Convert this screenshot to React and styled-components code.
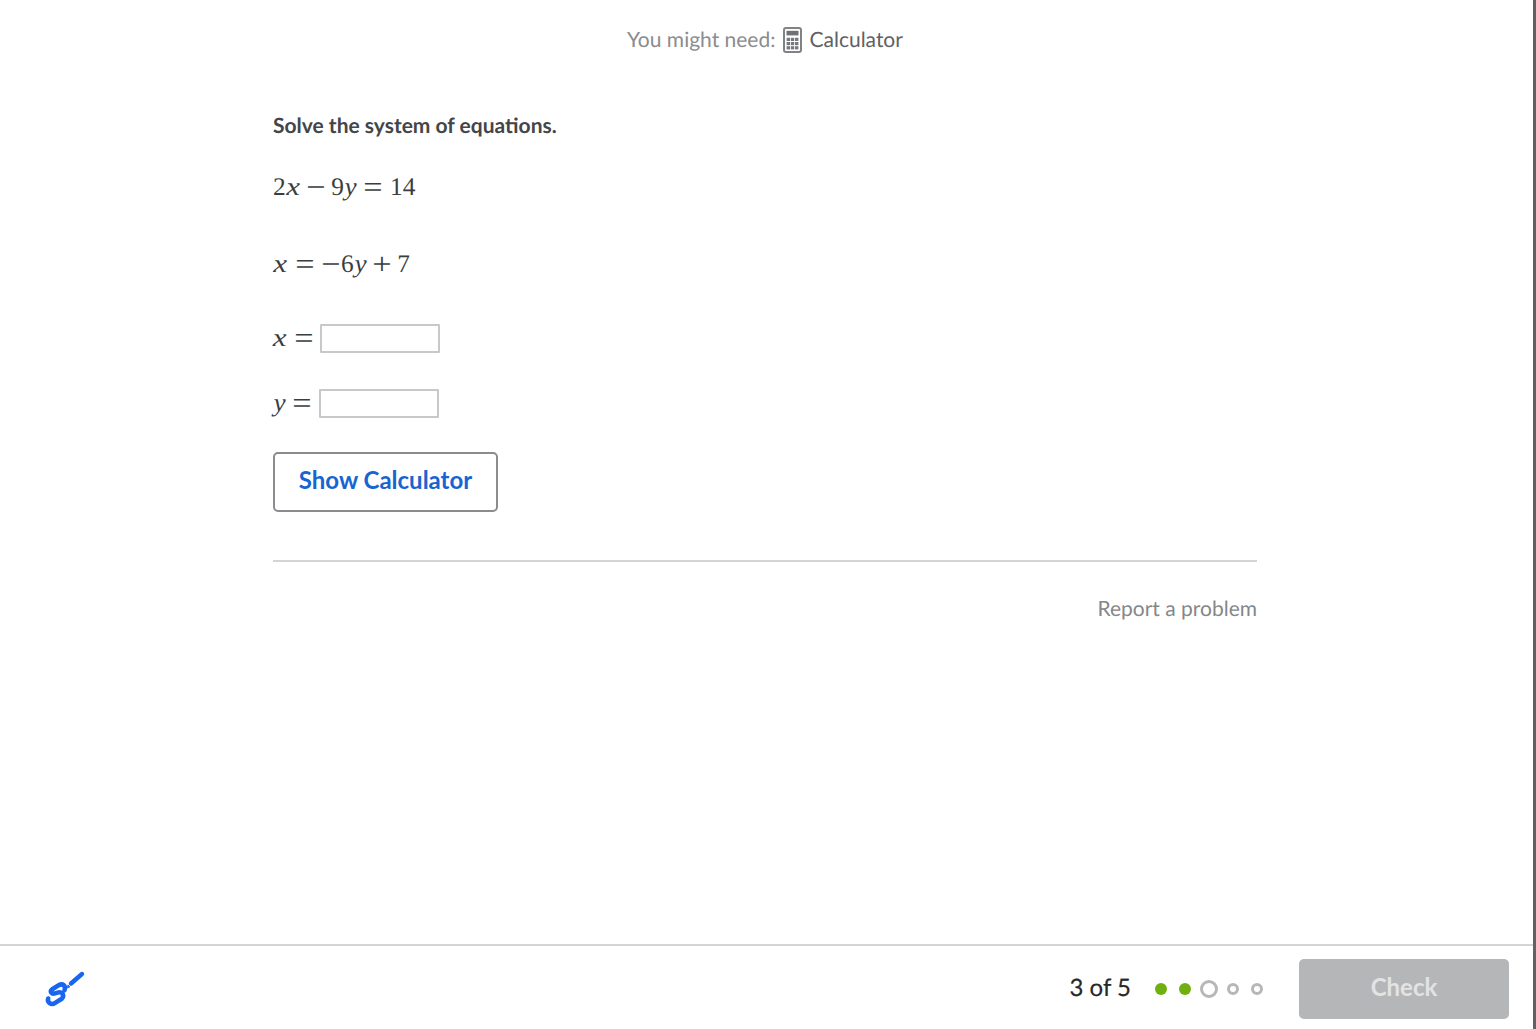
import React from 'react'
import styled, { createGlobalStyle } from 'styled-components'

const GlobalStyle = createGlobalStyle`
  html, body {
    margin: 0;
    padding: 0;
    background: #fff;
  }
  body {
    font-family: Lato, "Noto Sans", sans-serif;
    color: #3b3e40;
    text-rendering: geometricPrecision;
  }
`

export default function App(){
  return(
    <Page>
      <GlobalStyle />
      <Main>
        <Content>
          <Needs>
            <NeedsLabel>You might need:</NeedsLabel>
            <CalculatorIcon />
            <NeedsTool>Calculator</NeedsTool>
          </Needs>
          <Column>
            <Prompt>Solve the system of equations.</Prompt>
            <Equation $top={34}>
              <Num>2</Num><Var $w={14.5}>x</Var><Op $gap={5.6}>−</Op><Num>9</Num><Var $w={12.4} $y>y</Var><Op $gap={7}>=</Op><Num>14</Num>
            </Equation>
            <Equation $top={50}>
              <Var $w={14.5}>x</Var><Op $gap={7}>=</Op><Op $gap={0}>−</Op><Num>6</Num><Var $w={12.4} $y>y</Var><Op $gap={5.6}>+</Op><Num>7</Num>
            </Equation>
            <AnswerRow $top={46}>
              <Var $w={13.5}>x</Var><Op $gap={7}>=</Op><AnswerBox aria-label="x" />
            </AnswerRow>
            <AnswerRow $top={37}>
              <Var $w={12.4} $y>y</Var><Op $gap={7}>=</Op><AnswerBox aria-label="y" />
            </AnswerRow>
            <ShowButton>Show Calculator</ShowButton>
            <Divider />
            <Report>Report a problem</Report>
          </Column>
        </Content>
        <Footer>
          <ScratchIcon />
          <FooterRight>
            <Progress>3 of 5</Progress>
            <Dots>
              <Dot $kind="done" />
              <Dot $kind="done" />
              <Dot $kind="current" />
              <Dot />
              <Dot />
            </Dots>
            <CheckButton disabled>Check</CheckButton>
          </FooterRight>
        </Footer>
      </Main>
      <Edge />
    </Page>
  )
}

function CalculatorIcon(){
  let keys = []
  for(let row = 0; row < 3; row++){
    for(let col = 0; col < 3; col++){
      keys.push(<rect key={row + '-' + col} x={3.6 + col * 4.2} y={10.8 + row * 4.2} width="3.4" height="3.2" fill="#77797c" />)
    }
  }
  return(
    <IconSvg width="19" height="26" viewBox="0 0 19 26">
      <rect x="1" y="1" width="17" height="24" rx="2" fill="#fff" stroke="#808285" strokeWidth="2" />
      <rect x="3.5" y="3.8" width="12" height="4.6" fill="#6f7174" />
      {keys}
    </IconSvg>
  )
}

function ScratchIcon(){
  return(
    <svg width="44" height="44" viewBox="0 0 44 44" fill="none">
      <path d="M19 21C19 16 15 15 12 18L7 24C5 27 8 29 11 27L14 25C17 23 21 26 19 30L14 36C11 40 6 38 6 34" transform="rotate(18 13 27)" stroke="#1865f2" strokeWidth="4.6" strokeLinecap="round" strokeLinejoin="round" />
      <path d="M27 16.5L38 7" stroke="#1865f2" strokeWidth="4.4" strokeLinecap="round" />
      <path d="M22.8 21.2L24 17.8L26 20Z" fill="#1865f2" stroke="#1865f2" strokeWidth="0.6" />
    </svg>
  )
}

const Page = styled.div`
  display: flex;
  width: 1536px;
  height: 1029px;
  overflow: hidden;
  background: #fff;
`

const Main = styled.div`
  flex: 1;
  display: flex;
  flex-direction: column;
  min-width: 0;
`

const Edge = styled.div`
  width: 3px;
  background: #5f6165;
`

const Content = styled.div`
  flex: 1;
  min-height: 0;
  padding: 0 276px 0 273px;
`

const Needs = styled.div`
  display: flex;
  align-items: center;
  justify-content: center;
  height: 79px;
  font-size: 21px;
`

const NeedsLabel = styled.span`
  color: #8a8c8f;
  margin-right: 8px;
`

const NeedsTool = styled.span`
  color: #5f6165;
  margin-left: 7px;
`

const IconSvg = styled.svg`
  display: block;
`

const Column = styled.div`
  display: flex;
  flex-direction: column;
  align-items: flex-start;
  padding-top: 33px;
`

const Prompt = styled.div`
  font-size: 21px;
  font-weight: 700;
  line-height: 28px;
  color: #434649;
`

const Equation = styled.div`
  display: flex;
  align-items: baseline;
  margin-top: ${p => p.$top}px;
  height: 27px;
  font-family: "Liberation Serif", "DejaVu Serif", serif;
  font-size: 25.4px;
  line-height: 27px;
  color: #3b3e40;
`

const Num = styled.span``

const Var = styled.span`
  display: inline-block;
  width: ${p => p.$w}px;
  text-align: center;
  font-style: italic;
  transform: ${p => p.$y ? 'translateX(0.5px) scaleX(1.05)' : 'scaleX(1.22)'};
`

const Op = styled.span`
  display: inline-block;
  width: 19.8px;
  margin: 0 ${p => p.$gap}px;
  text-align: center;
  transform: scale(1.35, 1.2);
`

const AnswerRow = styled.div`
  display: flex;
  align-items: center;
  margin-top: ${p => p.$top}px;
  height: 28px;
  font-family: "Liberation Serif", "DejaVu Serif", serif;
  font-size: 25.4px;
  color: #3b3e40;
`

const AnswerBox = styled.input`
  box-sizing: border-box;
  width: 120px;
  height: 29px;
  padding: 0;
  background: #fff;
  border: 2px solid #c8c8c8;
  border-radius: 1px;
  outline: none;
`

const ShowButton = styled.button`
  box-sizing: border-box;
  width: 225px;
  height: 60px;
  margin-top: 35px;
  padding: 0 0 5px;
  background: #fff;
  border: 2px solid #8a8c8f;
  border-radius: 5px;
  color: #1865d2;
  font-family: Lato, sans-serif;
  font-size: 24px;
  font-weight: 700;
`

const Divider = styled.div`
  align-self: stretch;
  height: 2px;
  margin-top: 48px;
  background: #d4d5d6;
`

const Report = styled.div`
  align-self: flex-end;
  margin-top: 33px;
  font-size: 21px;
  line-height: 28px;
  color: #85878a;
`

const Footer = styled.div`
  box-sizing: border-box;
  display: flex;
  align-items: center;
  justify-content: space-between;
  height: 85px;
  padding: 2px 24px 0 44px;
  border-top: 2px solid #d4d5d6;
`

const FooterRight = styled.div`
  display: flex;
  align-items: center;
`

const Progress = styled.div`
  font-size: 24px;
  color: #26282a;
  -webkit-text-stroke: 0.2px #26282a;
  padding-bottom: 2px;
`

const Dots = styled.div`
  display: flex;
  align-items: center;
  gap: 6px;
  margin-left: 21px;
  margin-right: 33px;
`

const Dot = styled.span`
  box-sizing: border-box;
  display: flex;
  width: 18px;
  height: 18px;

  &::after {
    content: '';
    box-sizing: border-box;
    margin: auto;
    border-radius: 50%;
    width: ${p => p.$kind === 'current' ? 18 : 12}px;
    height: ${p => p.$kind === 'current' ? 18 : 12}px;
    background: ${p => p.$kind === 'done' ? '#6fb00f' : '#fff'};
    border: ${p => p.$kind === 'done' ? 'none' : '3px solid #b6b7b9'};
  }
`

const CheckButton = styled.button`
  width: 210px;
  height: 60px;
  padding: 0 0 5px;
  border: none;
  border-radius: 5px;
  background: #b5b6b8;
  color: #e3e3e4;
  font-family: Lato, sans-serif;
  font-size: 24px;
  font-weight: 700;
`
